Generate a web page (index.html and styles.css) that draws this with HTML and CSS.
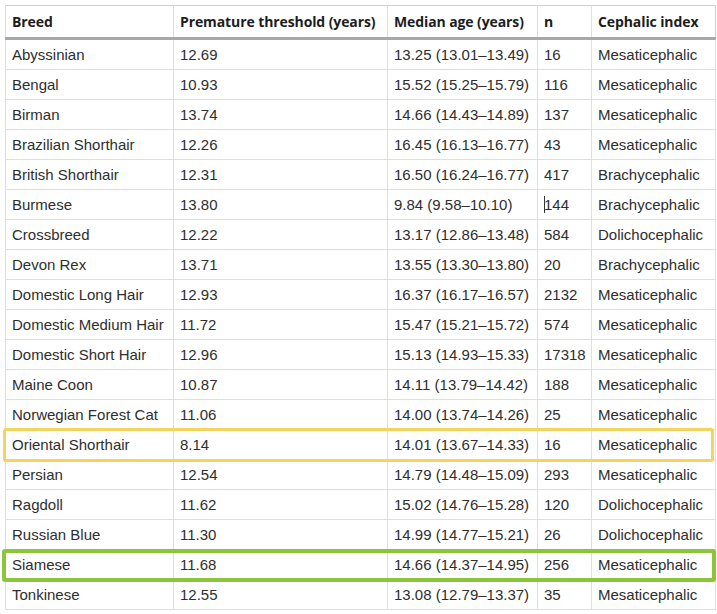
FILE: index.html
```html
<!DOCTYPE html>
<html>
<head>
<meta charset="utf-8">
<link rel="stylesheet" href="styles.css">
</head>
<body>
<div class="wrap">
<table class="data">
<colgroup>
<col class="c1"><col class="c2"><col class="c3"><col class="c4"><col class="c5">
</colgroup>
<thead>
<tr><th>Breed</th><th>Premature threshold (years)</th><th>Median age (years)</th><th>n</th><th>Cephalic index</th></tr>
</thead>
<tbody>
<tr><td>Abyssinian</td><td>12.69</td><td>13.25 (13.01–13.49)</td><td>16</td><td>Mesaticephalic</td></tr>
<tr><td>Bengal</td><td>10.93</td><td>15.52 (15.25–15.79)</td><td>116</td><td>Mesaticephalic</td></tr>
<tr><td>Birman</td><td>13.74</td><td>14.66 (14.43–14.89)</td><td>137</td><td>Mesaticephalic</td></tr>
<tr><td>Brazilian Shorthair</td><td>12.26</td><td>16.45 (16.13–16.77)</td><td>43</td><td>Mesaticephalic</td></tr>
<tr><td>British Shorthair</td><td>12.31</td><td>16.50 (16.24–16.77)</td><td>417</td><td>Brachycephalic</td></tr>
<tr><td>Burmese</td><td>13.80</td><td>9.84 (9.58–10.10)</td><td><span class="caret"></span>144</td><td>Brachycephalic</td></tr>
<tr><td>Crossbreed</td><td>12.22</td><td>13.17 (12.86–13.48)</td><td>584</td><td>Dolichocephalic</td></tr>
<tr><td>Devon Rex</td><td>13.71</td><td>13.55 (13.30–13.80)</td><td>20</td><td>Brachycephalic</td></tr>
<tr><td>Domestic Long Hair</td><td>12.93</td><td>16.37 (16.17–16.57)</td><td>2132</td><td>Mesaticephalic</td></tr>
<tr><td>Domestic Medium Hair</td><td>11.72</td><td>15.47 (15.21–15.72)</td><td>574</td><td>Mesaticephalic</td></tr>
<tr><td>Domestic Short Hair</td><td>12.96</td><td>15.13 (14.93–15.33)</td><td>17318</td><td>Mesaticephalic</td></tr>
<tr><td>Maine Coon</td><td>10.87</td><td>14.11 (13.79–14.42)</td><td>188</td><td>Mesaticephalic</td></tr>
<tr><td>Norwegian Forest Cat</td><td>11.06</td><td>14.00 (13.74–14.26)</td><td>25</td><td>Mesaticephalic</td></tr>
<tr><td>Oriental Shorthair</td><td>8.14</td><td>14.01 (13.67–14.33)</td><td>16</td><td>Mesaticephalic</td></tr>
<tr><td>Persian</td><td>12.54</td><td>14.79 (14.48–15.09)</td><td>293</td><td>Mesaticephalic</td></tr>
<tr><td>Ragdoll</td><td>11.62</td><td>15.02 (14.76–15.28)</td><td>120</td><td>Dolichocephalic</td></tr>
<tr><td>Russian Blue</td><td>11.30</td><td>14.99 (14.77–15.21)</td><td>26</td><td>Dolichocephalic</td></tr>
<tr><td>Siamese</td><td>11.68</td><td>14.66 (14.37–14.95)</td><td>256</td><td>Mesaticephalic</td></tr>
<tr><td>Tonkinese</td><td>12.55</td><td>13.08 (12.79–13.37)</td><td>35</td><td>Mesaticephalic</td></tr>
</tbody>
</table>
<div class="hl hl-yellow"></div>
<div class="hl hl-green"></div>
</div>
</body>
</html>
```

FILE: styles.css
```css
html, body {
  margin: 0;
  padding: 0;
  background: #ffffff;
}
.wrap {
  position: relative;
  padding: 5px 0 0 5px;
}
.data {
  border-collapse: collapse;
  width: 710px;
  table-layout: fixed;
  border: 1px solid #cfcfcf;
  font-family: "Liberation Sans", Arial, sans-serif;
  font-size: 15px;
  color: #2e2e2e;
}
.c1 { width: 168px; }
.c2 { width: 214px; }
.c3 { width: 150px; }
.c4 { width: 54px; }
.c5 { width: 124px; }
.data th {
  font-family: "Open Sans", "Liberation Sans", sans-serif;
  font-weight: 700;
  font-size: 14px;
  text-align: left;
  height: 31px;
  padding: 0 6px;
  border-left: 1px solid #dedede;
  border-bottom: 3px solid #a8a8a8;
  color: #1d1d1d;
  white-space: nowrap;
  letter-spacing: -0.1px;
}
.data td {
  height: 29px;
  padding: 0 6px;
  border: 1px solid #dedede;
  white-space: nowrap;
}
.caret {
  display: inline-block;
  width: 1px;
  height: 17px;
  background: #333;
  vertical-align: -3px;
  margin-right: -1px;
}
.hl {
  position: absolute;
  box-sizing: border-box;
  border-radius: 3px;
  pointer-events: none;
}
.hl-yellow {
  left: 3px;
  top: 428px;
  width: 711px;
  height: 34px;
  border: 3px solid #f4d35e;
}
.hl-green {
  left: 2px;
  top: 549px;
  width: 714px;
  height: 33px;
  border: 4px solid #8cc43c;
}
```
